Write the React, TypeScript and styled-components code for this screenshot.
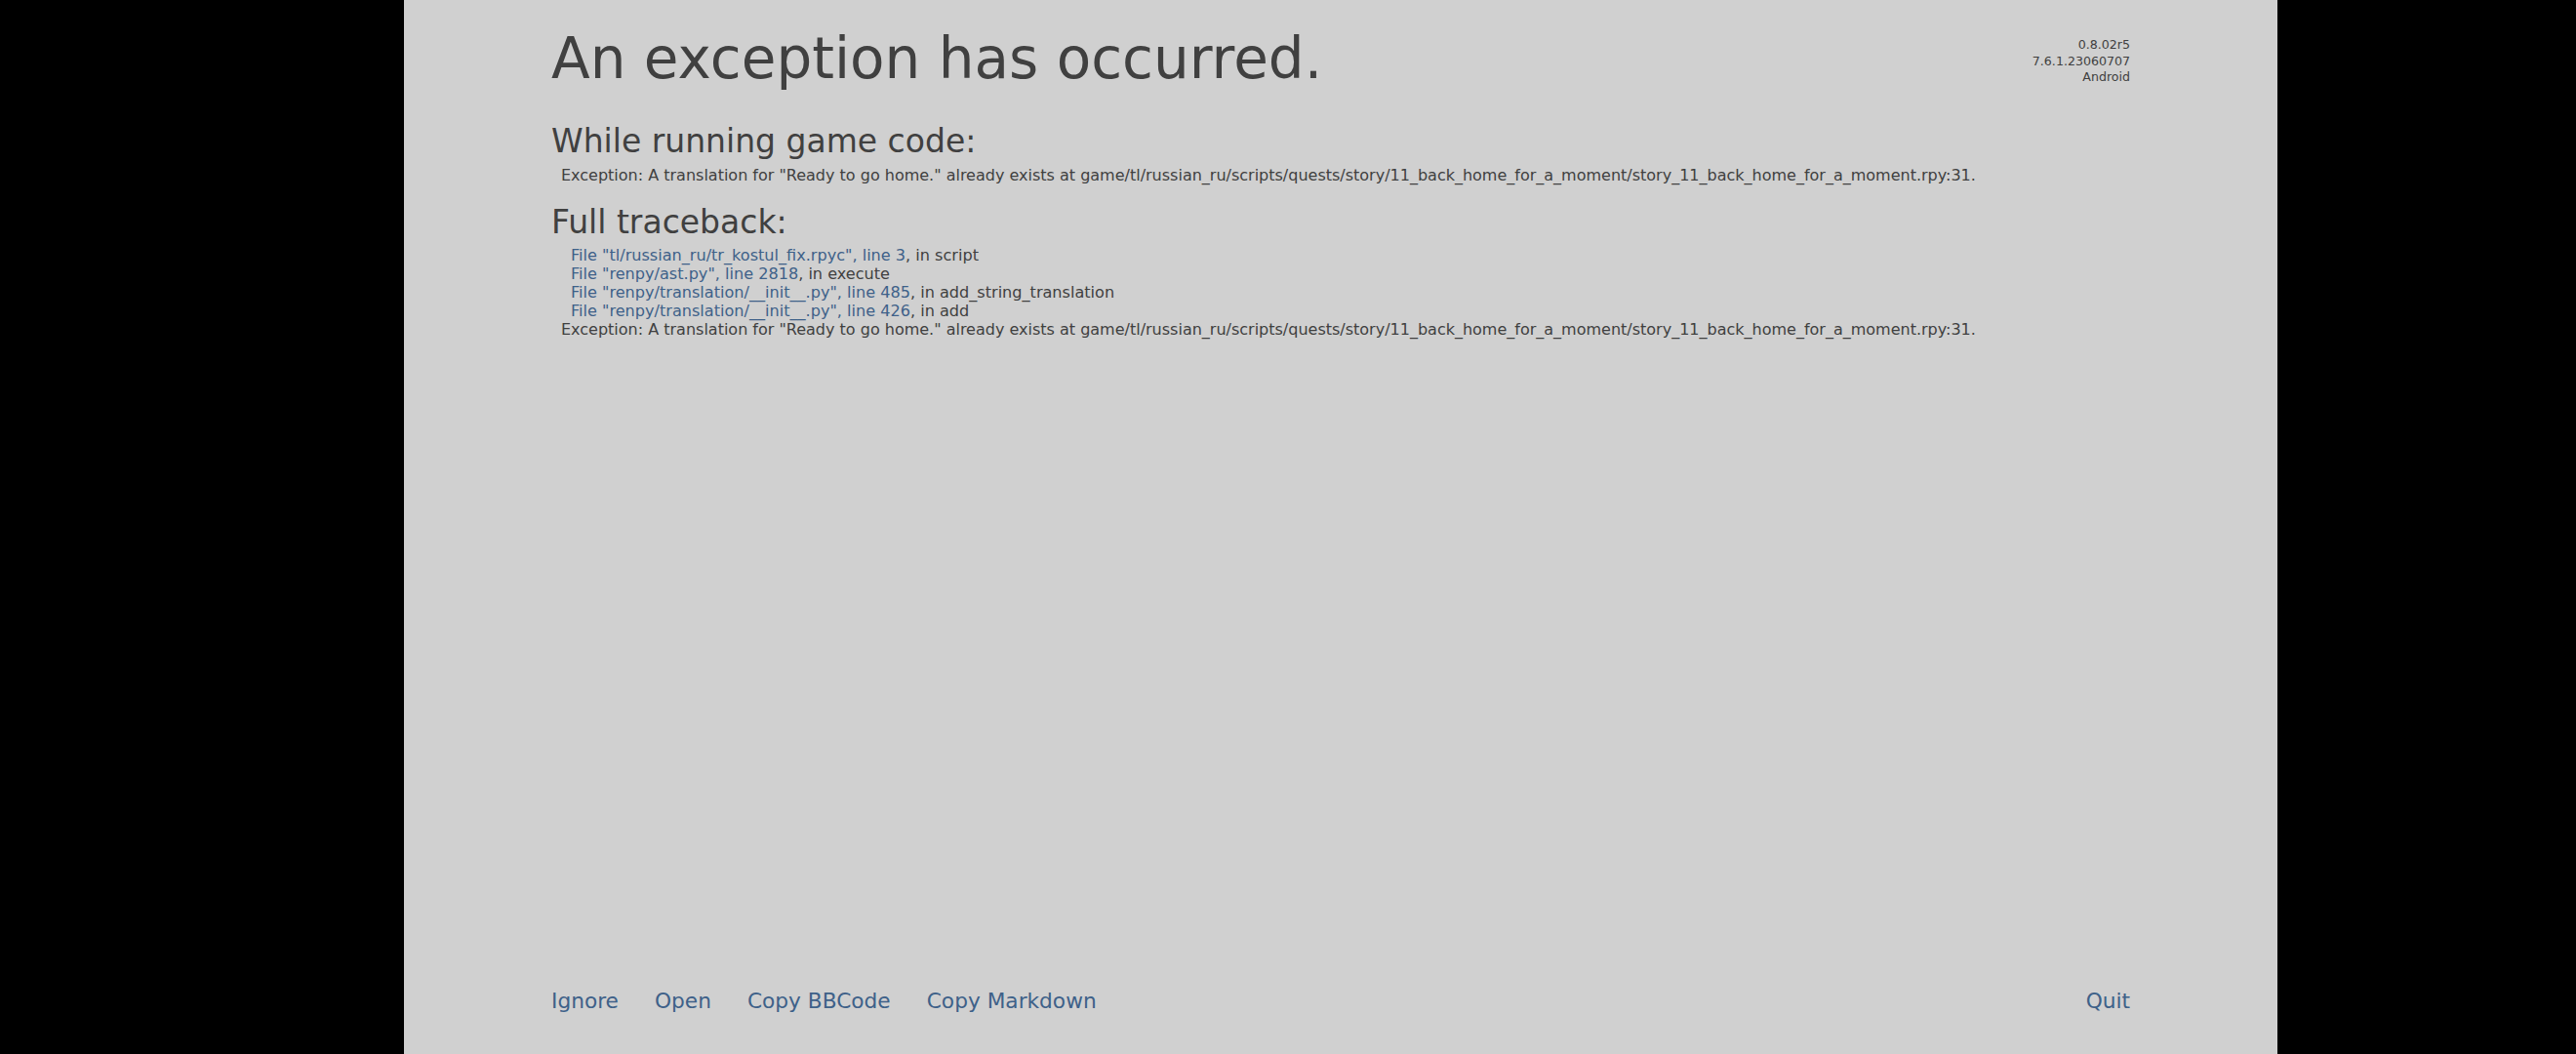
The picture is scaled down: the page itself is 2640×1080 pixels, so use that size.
import styled, { createGlobalStyle } from "styled-components";

type Frame = {
  file: string;
  line: number;
  where: string;
};

const message =
  'Exception: A translation for "Ready to go home." already exists at game/tl/russian_ru/scripts/quests/story/11_back_home_for_a_moment/story_11_back_home_for_a_moment.rpy:31.';

const frames: Frame[] = [
  { file: "tl/russian_ru/tr_kostul_fix.rpyc", line: 3, where: "script" },
  { file: "renpy/ast.py", line: 2818, where: "execute" },
  { file: "renpy/translation/__init__.py", line: 485, where: "add_string_translation" },
  { file: "renpy/translation/__init__.py", line: 426, where: "add" },
];

const versions = ["0.8.02r5", "7.6.1.23060707", "Android"];

const actions = ["Ignore", "Open", "Copy BBCode", "Copy Markdown"];

export default function App() {
  return (
    <>
      <GlobalStyle />
      <Screen>
        <Panel>
          <Header>
            <Title>An exception has occurred.</Title>
            <Versions>
              {versions.map((v) => (
                <div key={v}>{v}</div>
              ))}
            </Versions>
          </Header>

          <Section>While running game code:</Section>
          <Message>{message}</Message>

          <Section $gap={19}>Full traceback:</Section>
          <Trace>
            {frames.map(({ file, line, where }, i) => (
              <Frame key={i}>
                <Link>
                  File "{file}", line {line}
                </Link>
                , in {where}
              </Frame>
            ))}
          </Trace>
          <Message $flush>{message}</Message>

          <Footer>
            <Actions>
              {actions.map((a) => (
                <Button key={a}>{a}</Button>
              ))}
            </Actions>
            <Button>Quit</Button>
          </Footer>
        </Panel>
      </Screen>
    </>
  );
}

const GlobalStyle = createGlobalStyle`
  html, body {
    margin: 0;
    padding: 0;
    background: #000;
  }
  body {
    font-family: "DejaVu Sans", "Liberation Sans", sans-serif;
    color: #404040;
  }
`;

const Screen = styled.div`
  display: flex;
  height: 1080px;
  width: 2640px;
  padding-left: 414px;
  box-sizing: border-box;
  background: #000;
`;

const Panel = styled.div`
  width: 1920px;
  height: 1080px;
  box-sizing: border-box;
  padding: 26px 151px 41px 151px;
  background: #d0d0d0;
  display: flex;
  flex-direction: column;
`;

const Header = styled.div`
  display: flex;
  justify-content: space-between;
  align-items: flex-start;
`;

const Title = styled.h1`
  margin: 0;
  font-weight: normal;
  font-size: 58px;
  line-height: 69px;
`;

const Versions = styled.div`
  margin-top: 12px;
  text-align: right;
  font-size: 12.6px;
  line-height: 16.5px;
`;

const Section = styled.h2<{ $gap?: number }>`
  margin: ${(p) => p.$gap ?? 30}px 0 0;
  font-weight: normal;
  font-size: 33px;
  line-height: 40px;
`;

const Message = styled.div<{ $flush?: boolean }>`
  margin: ${(p) => (p.$flush ? 0 : 5)}px 0 0 10px;
  font-size: 16px;
  line-height: 19px;
  white-space: nowrap;
`;

const Trace = styled.div`
  margin: 4px 0 0 20px;
  display: flex;
  flex-direction: column;
`;

const Frame = styled.div`
  font-size: 16.1px;
  line-height: 19px;
  white-space: nowrap;
`;

const Link = styled.span`
  color: #3e6189;
`;

const Footer = styled.div`
  margin-top: auto;
  display: flex;
  justify-content: space-between;
  align-items: center;
`;

const Actions = styled.div`
  display: flex;
  gap: 37px;
`;

const Button = styled.div`
  font-size: 21.7px;
  line-height: 26px;
  color: #3e6189;
  cursor: pointer;
`;
